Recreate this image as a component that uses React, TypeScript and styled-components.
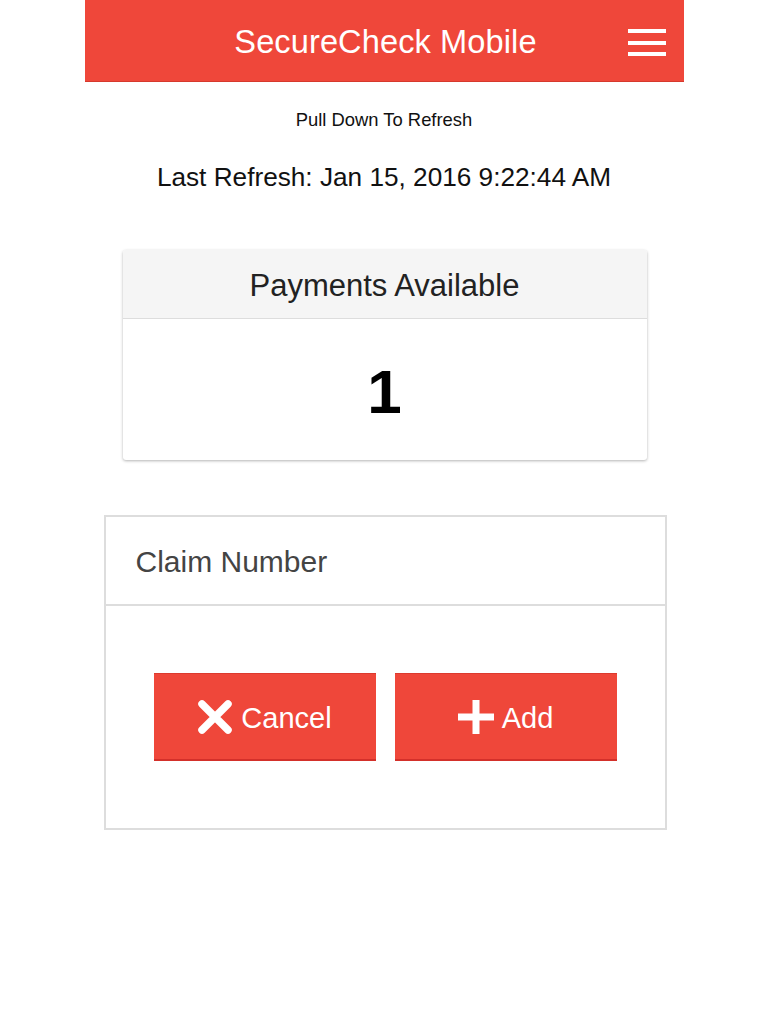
import React from "react";
import styled, { createGlobalStyle } from "styled-components";

const GlobalStyle = createGlobalStyle`
  html, body {
    margin: 0;
    padding: 0;
    background: #ffffff;
  }
  body {
    font-family: "Liberation Sans", Arial, Helvetica, sans-serif;
    color: #111;
  }
  * { box-sizing: border-box; }
`;

const Page = styled.div`
  width: 599px;
  margin: 0 auto;
  display: flex;
  flex-direction: column;
  align-items: stretch;
  min-height: 1024px;
`;

const Header = styled.header`
  position: relative;
  height: 82px;
  background: #ef473a;
  border-bottom: 1px solid #d6392d;
  display: flex;
  align-items: center;
  justify-content: center;
  padding-top: 3px;
`;

const Title = styled.h1`
  margin: 0 0 0 3px;
  font-size: 32.6px;
  font-weight: 400;
  color: #ffffff;
  letter-spacing: 0.1px;
`;

const MenuButton = styled.button`
  position: absolute;
  right: 18px;
  top: 29px;
  width: 38px;
  height: 27px;
  padding: 0;
  border: none;
  background: transparent;
  display: flex;
  flex-direction: column;
  justify-content: space-between;
`;

const MenuLine = styled.span`
  display: block;
  height: 4px;
  width: 100%;
  background: #ffffff;
`;

const Hint = styled.div`
  margin-top: 28px;
  text-align: center;
  font-size: 18.4px;
  line-height: 20px;
  color: #111;
`;

const Refresh = styled.div`
  margin-top: 32px;
  text-align: center;
  font-size: 26.2px;
  line-height: 30px;
  color: #111;
`;

const Card = styled.section`
  margin: 58px 37px 0 38px;
  background: #ffffff;
  border-radius: 3px;
  box-shadow: 0 1px 3px rgba(0, 0, 0, 0.3);
  overflow: hidden;
`;

const CardHeader = styled.div`
  height: 69px;
  padding-top: 4px;
  background: #f5f5f5;
  border-bottom: 1px solid #dddddd;
  display: flex;
  align-items: center;
  justify-content: center;
  font-size: 31px;
  color: #222;
`;

const CardBody = styled.div`
  height: 141px;
  padding-top: 4px;
  display: flex;
  align-items: center;
  justify-content: center;
  font-size: 62px;
  font-weight: 700;
  color: #000;
`;

const FormBox = styled.section`
  margin: 55px 17px 0 19px;
  border: 2px solid #dddddd;
  display: flex;
  flex-direction: column;
`;

const InputRow = styled.div`
  height: 89px;
  border-bottom: 2px solid #dddddd;
  display: flex;
  align-items: center;
  padding-left: 30px;
  padding-top: 2px;
  font-size: 30px;
  color: #444;
`;

const ButtonRow = styled.div`
  padding: 67px 0 67px;
  display: flex;
  justify-content: center;
  gap: 19px;
`;

const ActionButton = styled.button`
  width: 222px;
  height: 88px;
  background: #ef473a;
  border: none;
  border-top: 1px solid #dc3a2e;
  border-bottom: 2px solid #d3302a;
  color: #ffffff;
  font-family: "Liberation Sans", Arial, Helvetica, sans-serif;
  font-size: 29px;
  display: flex;
  align-items: center;
  justify-content: center;
  gap: 8px;
  padding: 4px 0 0;
`;

const Icon = styled.svg`
  width: 36px;
  height: 34px;
  flex-shrink: 0;
  margin-top: -3px;
`;

const CloseIcon = () => (
  <Icon viewBox="0 0 36 34" aria-hidden="true">
    <path
      d="M5 4 L31 30 M31 4 L5 30"
      stroke="#ffffff"
      strokeWidth="7.5"
      strokeLinecap="round"
      fill="none"
    />
  </Icon>
);

const PlusIcon = () => (
  <Icon viewBox="0 0 36 34" aria-hidden="true">
    <path d="M14.5 0 H21.5 V13.5 H36 V20.5 H21.5 V34 H14.5 V20.5 H0 V13.5 H14.5 Z" fill="#ffffff" />
  </Icon>
);

export default function App() {
  return (
    <>
      <GlobalStyle />
      <Page>
        <Header>
          <Title>SecureCheck Mobile</Title>
          <MenuButton aria-label="Menu">
            <MenuLine />
            <MenuLine />
            <MenuLine />
          </MenuButton>
        </Header>
        <Hint>Pull Down To Refresh</Hint>
        <Refresh>Last Refresh: Jan 15, 2016 9:22:44 AM</Refresh>
        <Card>
          <CardHeader>Payments Available</CardHeader>
          <CardBody>1</CardBody>
        </Card>
        <FormBox>
          <InputRow>Claim Number</InputRow>
          <ButtonRow>
            <ActionButton>
              <CloseIcon />
              Cancel
            </ActionButton>
            <ActionButton>
              <PlusIcon />
              Add
            </ActionButton>
          </ButtonRow>
        </FormBox>
      </Page>
    </>
  );
}
